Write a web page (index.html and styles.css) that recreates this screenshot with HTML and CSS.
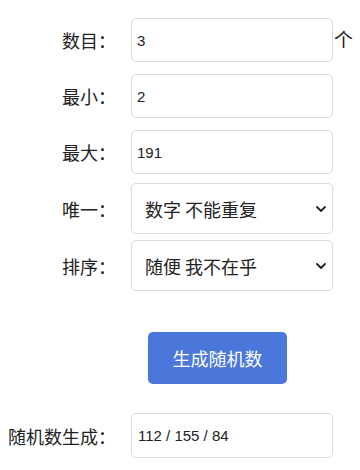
FILE: index.html
```html
<!DOCTYPE html>
<html lang="zh">
<head>
<meta charset="utf-8">
<link rel="stylesheet" href="styles.css">
</head>
<body>
<form class="form">
  <div class="row">
    <label class="label">数目：</label>
    <input class="field" type="text" value="3">
    <span class="suffix">个</span>
  </div>
  <div class="row">
    <label class="label">最小：</label>
    <input class="field" type="text" value="2">
  </div>
  <div class="row">
    <label class="label">最大：</label>
    <input class="field" type="text" value="191">
  </div>
  <div class="row row-select first-select">
    <label class="label">唯一：</label>
    <div class="select-wrap">
      <select class="select"><option>数字 不能重复</option></select>
      <svg class="chev" width="10" height="6" viewBox="0 0 10 6"><path d="M1 1 L5 5 L9 1" fill="none" stroke="#222" stroke-width="1.8" stroke-linecap="round" stroke-linejoin="round"/></svg>
    </div>
  </div>
  <div class="row row-select second-select">
    <label class="label">排序：</label>
    <div class="select-wrap">
      <select class="select"><option>随便 我不在乎</option></select>
      <svg class="chev" width="10" height="6" viewBox="0 0 10 6"><path d="M1 1 L5 5 L9 1" fill="none" stroke="#222" stroke-width="1.8" stroke-linecap="round" stroke-linejoin="round"/></svg>
    </div>
  </div>
  <div class="row button-row">
    <span class="label"></span>
    <button class="btn" type="button">生成随机数</button>
  </div>
  <div class="row result-row">
    <label class="label">随机数生成：</label>
    <input class="field result" type="text" value="112 / 155 / 84">
  </div>
</form>
</body>
</html>
```

FILE: styles.css
```css
html, body {
  margin: 0;
  padding: 0;
  background: #ffffff;
}
body {
  font-family: "Liberation Sans", "Noto Sans CJK SC", sans-serif;
  color: #222;
}
.form {
  display: flex;
  flex-direction: column;
  padding-top: 18px;
}
.row {
  display: flex;
  align-items: center;
  margin-bottom: 12px;
}
.label {
  width: 116px;
  flex: none;
  text-align: right;
  margin-right: 15px;
  font-size: 18px;
  font-family: "Noto Sans CJK SC", sans-serif;
  color: #222;
  white-space: nowrap;
}
.field {
  box-sizing: border-box;
  width: 202px;
  height: 44px;
  border: 1px solid #dadada;
  border-radius: 5px;
  padding: 0 5px;
  font-family: "Liberation Sans", sans-serif;
  font-size: 15px;
  color: #222;
  outline: none;
}
.suffix {
  font-family: "Noto Sans CJK SC", sans-serif;
  font-size: 19px;
  margin-left: 1px;
  margin-top: -4px;
}
.row-select.first-select {
  margin-top: -3px;
  margin-bottom: 6px;
}
.select-wrap {
  position: relative;
  width: 202px;
  height: 51px;
}
.select {
  box-sizing: border-box;
  width: 100%;
  height: 100%;
  -webkit-appearance: none;
  appearance: none;
  border: 1px solid #dadada;
  border-radius: 5px;
  background: #fff;
  padding: 0 0 0 13px;
  font-family: "Noto Sans CJK SC", sans-serif;
  font-size: 18px;
  color: #222;
  outline: none;
}
.chev {
  position: absolute;
  right: 7px;
  top: 50%;
  margin-top: -3px;
  pointer-events: none;
}
.button-row {
  margin-top: 29px;
  margin-bottom: 29px;
}
.btn {
  margin-left: 17px;
  width: 139px;
  height: 52px;
  border: none;
  border-radius: 5px;
  background: #4a77d9;
  color: #fff;
  font-family: "Noto Sans CJK SC", sans-serif;
  font-size: 18px;
  padding: 0;
}
.result {
  height: 45px;
  padding-left: 6px;
}
```
